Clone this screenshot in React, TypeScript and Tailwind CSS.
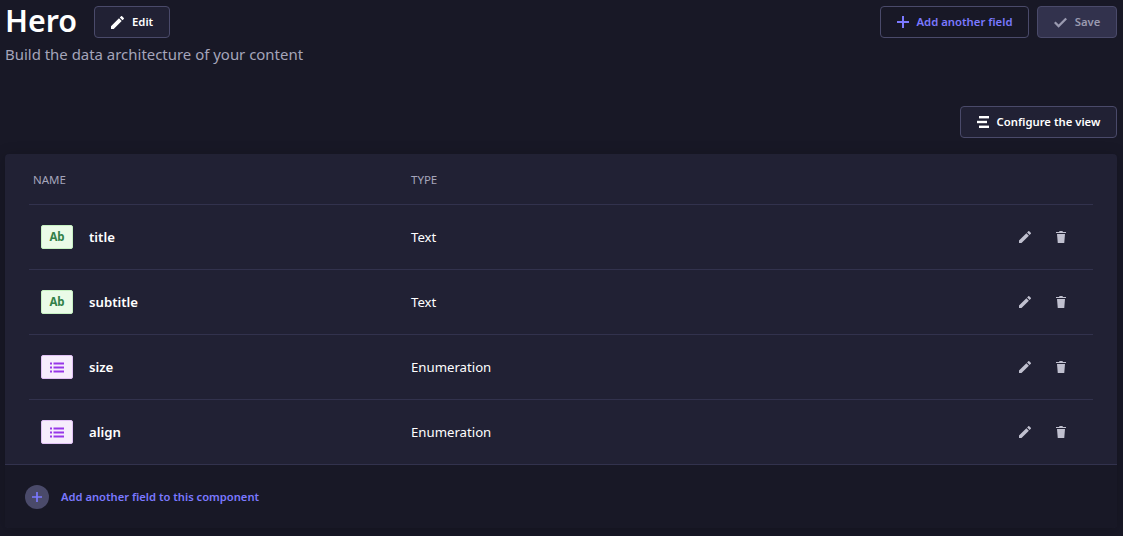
import React from "react";

function Pencil({ className }: { className?: string }) {
  return (
    <svg viewBox="3 3 18 18" className={className} fill="currentColor">
      <path d="M3 17.25V21h3.75L17.81 9.94l-3.75-3.75L3 17.25zM20.71 7.04a1 1 0 0 0 0-1.41l-2.34-2.34a1 1 0 0 0-1.41 0l-1.83 1.83 3.75 3.75 1.83-1.83z" />
    </svg>
  );
}

function Trash({ className }: { className?: string }) {
  return (
    <svg viewBox="0 0 20 24" className={className} fill="currentColor">
      <path d="M7 0h6l.8 2H20v2H0V2h6.2L7 0zM2 6h16l-1.5 18h-13L2 6z" />
    </svg>
  );
}

function Plus({ className }: { className?: string }) {
  return (
    <svg viewBox="0 0 24 24" className={className} fill="currentColor">
      <path d="M10 0h4v10h10v4H14v10h-4V14H0v-4h10V0z" />
    </svg>
  );
}

function Check({ className }: { className?: string }) {
  return (
    <svg viewBox="0 0 24 20" className={className} fill="currentColor">
      <path d="M8.5 19.5 0 11l3-3 5.5 5.5L21 1l3 3L8.5 19.5z" />
    </svg>
  );
}

function Layout({ className }: { className?: string }) {
  return (
    <svg viewBox="0 0 12 12" className={className} fill="currentColor">
      <rect x="2" y="0" width="10" height="2.4" />
      <rect x="0" y="4.8" width="10" height="2.4" />
      <rect x="2" y="9.6" width="10" height="2.4" />
    </svg>
  );
}

function ListIcon({ className }: { className?: string }) {
  return (
    <svg viewBox="0 0 14 11" className={className} fill="currentColor">
      <rect x="0" y="0.5" width="2" height="2" />
      <rect x="3.5" y="0.5" width="10.5" height="2" />
      <rect x="0" y="4.5" width="2" height="2" />
      <rect x="3.5" y="4.5" width="10.5" height="2" />
      <rect x="0" y="8.5" width="2" height="2" />
      <rect x="3.5" y="8.5" width="10.5" height="2" />
    </svg>
  );
}

const rows = [
  { name: "title", type: "Text", kind: "text" },
  { name: "subtitle", type: "Text", kind: "text" },
  { name: "size", type: "Enumeration", kind: "enum" },
  { name: "align", type: "Enumeration", kind: "enum" },
];

export default function App() {
  return (
    <div className="h-[536px] w-[1123px] overflow-hidden bg-[#181826] pl-[5px] pr-[6px] font-['Noto_Sans',sans-serif] text-white">
      <div className="flex items-start justify-between pt-[6px]">
        <div>
          <div className="flex h-[32px] items-center gap-[17px]">
            <h1 className="pb-[2px] text-[30.4px] leading-[30px] font-semibold">Hero</h1>
            <button className="flex h-[32px] w-[76px] items-center justify-center gap-[8px] rounded border border-[#4a4a6a] bg-[#212134] text-[11.3px] font-semibold">
              <Pencil className="h-[13px] w-[13px]" />
              <span>Edit</span>
            </button>
          </div>
          <p className="mt-[4px] text-[14.95px] leading-[24px] text-[#a5a5ba]">Build the data architecture of your content</p>
        </div>
        <div className="flex items-center gap-[8px]">
          <button className="flex h-[32px] w-[149px] items-center justify-center gap-[8px] rounded border border-[#4a4a6a] bg-[#181826] text-[11.3px] font-semibold text-[#7b79ff]">
            <Plus className="h-[12px] w-[12px]" />
            <span>Add another field</span>
          </button>
          <button className="flex h-[32px] w-[80px] items-center justify-center gap-[8px] rounded border border-[#4a4a6a] bg-[#32324d] text-[11.3px] font-semibold text-[#9a9ab0]">
            <Check className="h-[11px] w-[13px]" />
            <span>Save</span>
          </button>
        </div>
      </div>

      <div className="mt-[40px] flex justify-end">
        <button className="flex h-[32px] w-[157px] items-center justify-center gap-[8px] rounded border border-[#4a4a6a] bg-[#212134] text-[11.3px] font-semibold">
          <Layout className="h-[12px] w-[12px]" />
          <span>Configure the view</span>
        </button>
      </div>

      <div className="mt-[16px] h-[374px] overflow-hidden rounded bg-[#212134] shadow-[0_2px_15px_rgba(3,3,5,0.2)]">
        <div className="px-[24px]">
          <div className="flex h-[51px] items-center border-b border-[#32324d] pt-[2px] text-[11.5px] text-[#a5a5ba]">
            <div className="w-[382px] pl-[4px]">NAME</div>
            <div>TYPE</div>
          </div>
          {rows.map((r, i) => (
            <div key={r.name} className={`flex items-center ${i < rows.length - 1 ? "h-[65px] border-b border-[#32324d]" : "h-[64px]"}`}>
              <div className="flex w-[382px] items-center gap-[16px] pl-[12px]">
                {r.kind === "text" ? (
                  <div className="flex h-[24px] w-[32px] items-center justify-center rounded-[2px] border border-[#c6f0c2] bg-[#eafbe7] text-[11.5px] font-bold text-[#328048]">Ab</div>
                ) : (
                  <div className="flex h-[24px] w-[32px] items-center justify-center rounded-[2px] border border-[#e0c1f4] bg-[#f6ecfc] text-[#9736e8]">
                    <ListIcon className="h-[11px] w-[14px]" />
                  </div>
                )}
                <span className="pt-[1px] text-[13.2px] font-semibold">{r.name}</span>
              </div>
              <div className="flex-1 pt-[1px] text-[13.2px]">{r.type}</div>
              <div className="flex items-center gap-[25px] pr-[27px] text-[#c0c0cf]">
                <Pencil className="h-[12px] w-[12px]" />
                <Trash className="h-[12px] w-[10px]" />
              </div>
            </div>
          ))}
        </div>
        <div className="flex h-[64px] items-center gap-[12px] border-t border-[#32324d] bg-[#181826] pl-[20px]">
          <div className="flex h-[24px] w-[24px] items-center justify-center rounded-full bg-[#4a4a6a] text-[#7b79ff]">
            <Plus className="h-[10px] w-[10px]" />
          </div>
          <span className="pt-[2px] text-[11.2px] font-semibold text-[#7b79ff]">Add another field to this component</span>
        </div>
      </div>
    </div>
  );
}
